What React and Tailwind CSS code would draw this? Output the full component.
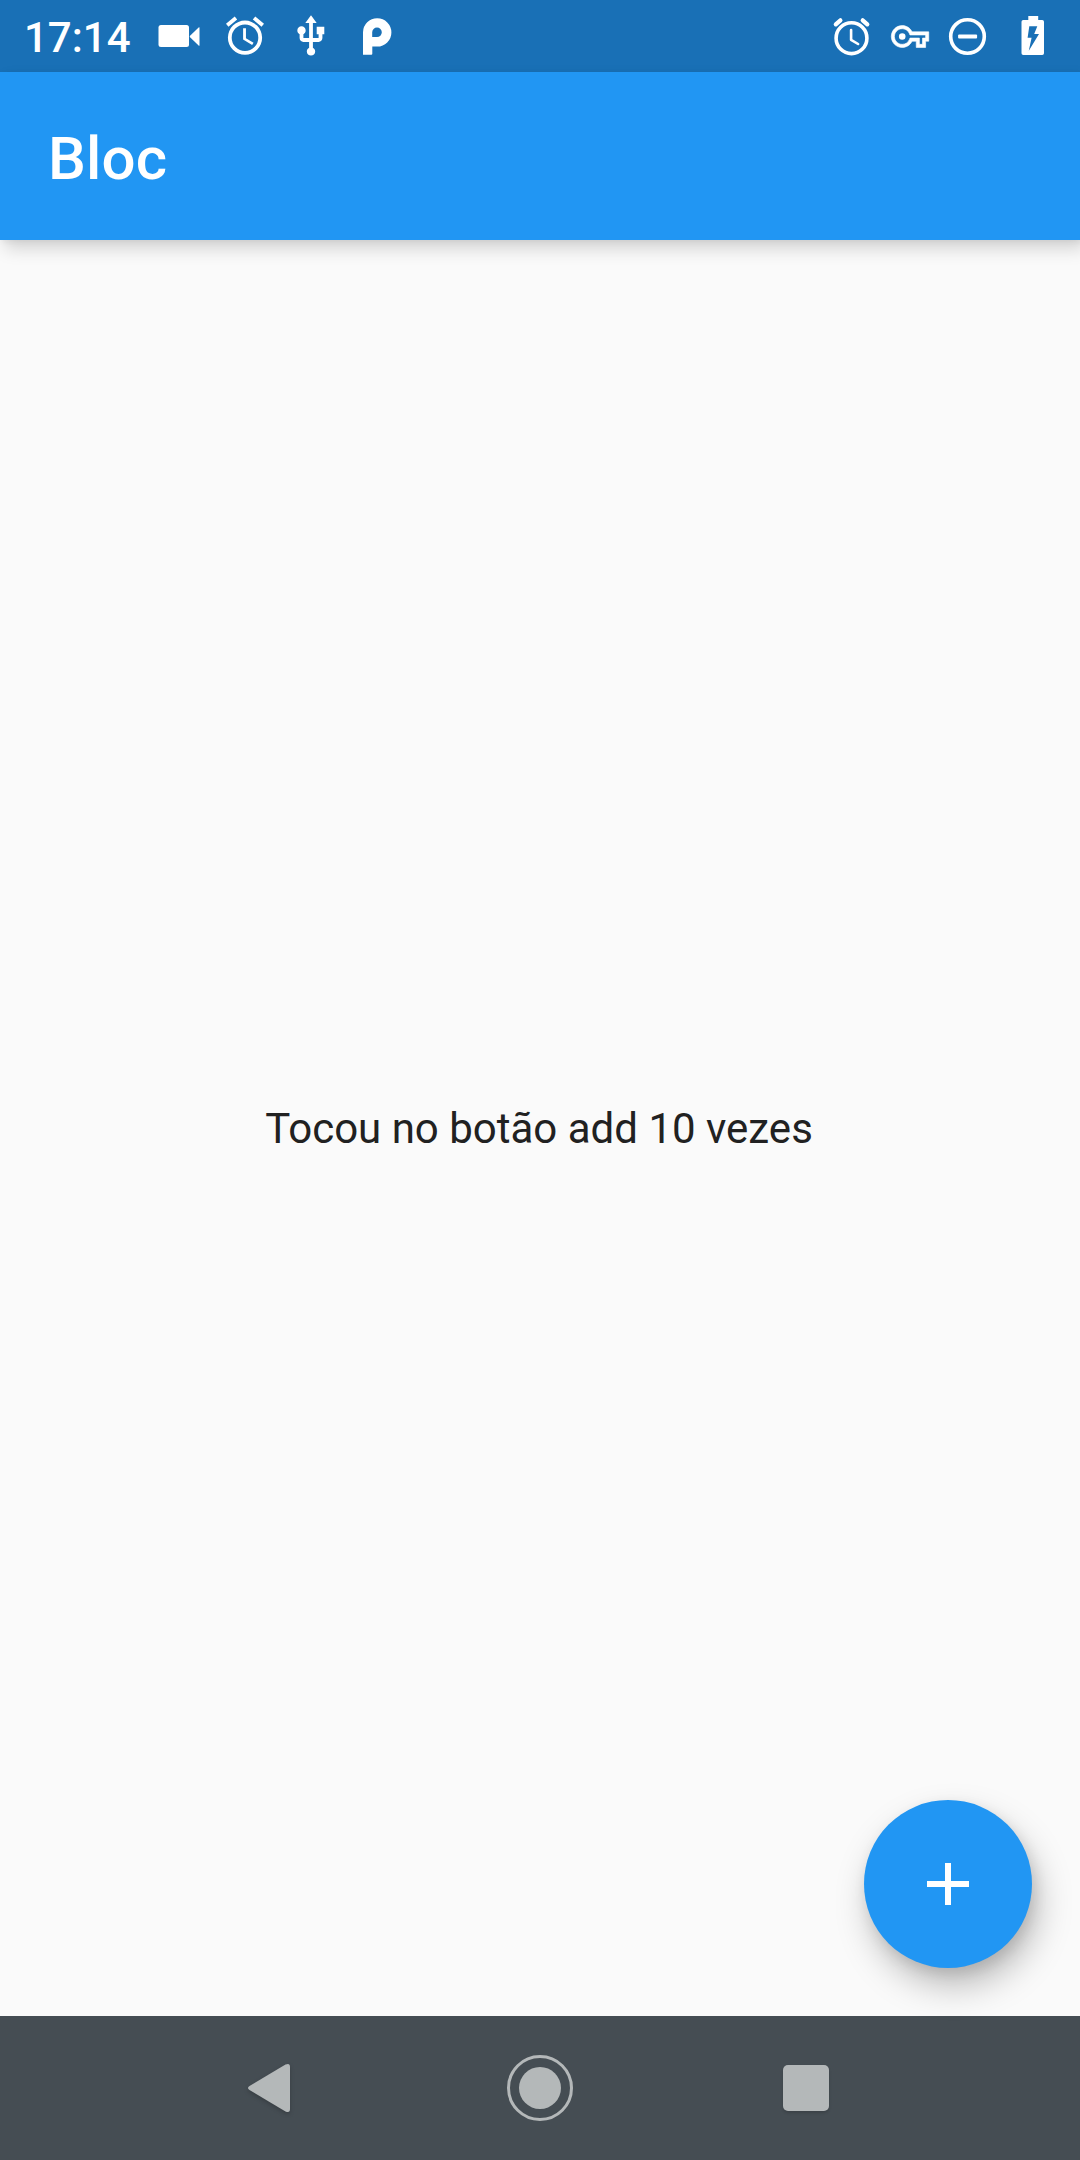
function StatusIcon({ children, className = "" }) {
  return (
    <svg className={`size-12 shrink-0 ${className}`} viewBox="0 0 48 48" fill="currentColor" aria-hidden="true">
      {children}
    </svg>
  );
}

function StatusBar() {
  return (
    <div className="flex h-[72px] items-center justify-between bg-[#1970b6] pr-[23px] pl-6 text-white">
      <div className="flex items-center gap-[18px]">
        <span className="w-[113px] pt-1 text-[42px] leading-[48px] font-medium">17:14</span>
        <StatusIcon>
          <rect x="3.5" y="13" width="30.5" height="22" rx="2.5" />
          <path d="M34.8 24 43.6 15.4q.9-.7.9.4v17.4q0 1.1-.9.4L34.8 25z" />
        </StatusIcon>
        <StatusIcon>
          <path
            transform="translate(1.2 1) scale(1.9)"
            d="M22 5.72l-4.6-3.86-1.29 1.53 4.6 3.86L22 5.72zM7.88 3.39L6.6 1.86 2 5.71l1.29 1.53 4.59-3.85zM12.5 8H11v6l4.75 2.85.75-1.23-4-2.37V8zM12 4a9 9 0 1 0 0 18 9 9 0 0 0 0-18zm0 16a7 7 0 1 1 0-14 7 7 0 0 1 0 14z"
          />
        </StatusIcon>
        <StatusIcon>
          <path
            transform="translate(1.2 1.4) scale(1.9)"
            d="M15 7v4h1v2h-3V5h2l-3-4-3 4h2v8H8v-2.07c.7-.37 1.2-1.08 1.2-1.93 0-1.21-.99-2.2-2.2-2.2-1.21 0-2.2.99-2.2 2.2 0 .85.5 1.56 1.2 1.93V13c0 1.11.89 2 2 2h3v3.05c-.71.37-1.2 1.1-1.2 1.95 0 1.22.99 2.2 2.2 2.2 1.21 0 2.2-.98 2.2-2.2 0-.85-.49-1.58-1.2-1.95V15h3c1.11 0 2-.89 2-2v-2h1V7h-4z"
          />
        </StatusIcon>
        <StatusIcon>
          <path
            fillRule="evenodd"
            d="M10 42.7V20.3a14.2 14.2 0 1 1 14.2 14.3H19.3V41.7q0 1-1 1zM19.2 25.1V20.3a4.8 4.8 0 1 1 4.8 4.8z"
          />
        </StatusIcon>
      </div>
      <div className="flex items-center gap-[10px]">
        <StatusIcon>
          <g fill="none" stroke="currentColor">
            <circle cx="23.5" cy="26.2" r="15.4" strokeWidth="3.6" />
            <path strokeWidth="4.2" strokeLinecap="round" d="M7.8 12.3 12.4 8.3M39.3 12.3 34.7 8.3" />
            <path strokeWidth="2.6" strokeLinecap="round" strokeLinejoin="round" d="M23.1 18V27.8L30.1 32" />
          </g>
        </StatusIcon>
        <StatusIcon>
          <g transform="translate(5.3 5.8) scale(1.56)">
            <path
              stroke="currentColor"
              strokeWidth="0.4"
              d="M22 19h-6v-4h-2.68c-1.14 2.42-3.6 4-6.32 4-3.86 0-7-3.14-7-7s3.14-7 7-7c2.72 0 5.17 1.58 6.32 4H24v6h-2v4zm-4-2h2v-4h2v-2H11.94l-.23-.67C11.01 8.34 9.11 7 7 7c-2.76 0-5 2.24-5 5s2.24 5 5 5c2.11 0 4.01-1.34 4.71-3.33l.23-.67H18v4z"
            />
            <circle cx="7" cy="12" r="2.1" />
          </g>
        </StatusIcon>
        <StatusIcon>
          <circle cx="23.5" cy="24.5" r="16.8" fill="none" stroke="currentColor" strokeWidth="3.6" />
          <rect x="14.1" y="22.6" width="19" height="3.8" rx="1" />
        </StatusIcon>
        <StatusIcon className="ml-[7px]">
          <path
            fillRule="evenodd"
            d="M19.3 4h9.9v4h4q1.8 0 1.8 1.8v31.4q0 1.8-1.8 1.8H14.3q-1.8 0-1.8-1.8V9.8q0-1.8 1.8-1.8h5zM20.3 14.3 18.6 25.8h4L19.8 38.8 30 22H25.2L28.3 14.3z"
          />
        </StatusIcon>
      </div>
    </div>
  );
}

function AppBar() {
  return (
    <header className="z-10 flex h-[168px] shrink-0 items-center bg-[#2196f3] px-12 pt-[5px] shadow-[5px_9px_16px_rgba(0,0,0,0.15),2px_2px_6px_rgba(0,0,0,0.06)]">
      <h1 className="text-[60px] leading-[70px] font-medium tracking-[0.15px] text-white">Bloc</h1>
    </header>
  );
}

function NavigationBar() {
  return (
    <nav className="flex h-36 shrink-0 items-center justify-center gap-[194px] bg-[#454d53] text-[#b4b8b9]">
      <button aria-label="Back" className="size-[72px]">
        <svg viewBox="0 0 72 72" fill="currentColor" className="size-full drop-shadow-[0_2px_2px_rgba(0,0,0,0.2)]">
          <path d="M11.5 34 47.5 12.6Q52 10.5 52 15V57Q52 61.5 47.5 59.4L11.5 38Q8.5 36 11.5 34z" />
        </svg>
      </button>
      <button aria-label="Home" className="size-[72px]">
        <svg viewBox="0 0 72 72" className="size-full">
          <circle cx="36" cy="36" r="31.5" fill="none" stroke="currentColor" strokeWidth="3" />
          <circle cx="36" cy="36" r="21" fill="currentColor" />
        </svg>
      </button>
      <button aria-label="Overview" className="flex size-[72px] items-center justify-center">
        <span className="size-[46px] rounded-[5px] bg-current shadow-[0_2px_3px_rgba(0,0,0,0.15)]" />
      </button>
    </nav>
  );
}

export default function App() {
  return (
    <div className="flex h-[2160px] w-[1080px] flex-col overflow-hidden bg-[#fafafa] font-['Roboto',sans-serif]">
      <StatusBar />
      <AppBar />
      <main className="relative flex flex-1 items-center justify-center">
        <p className="pr-0.5 text-[42px] leading-[49px] whitespace-nowrap text-[#212121]">
          Tocou no botão add 10 vezes
        </p>
        <button
          aria-label="Add"
          className="absolute right-12 bottom-12 flex size-[168px] items-center justify-center rounded-full bg-[#2196f3] text-white shadow-[6px_18px_34px_rgba(0,0,0,0.25),3px_6px_14px_rgba(0,0,0,0.1)]"
        >
          <svg viewBox="0 0 24 24" fill="currentColor" className="size-[72px]">
            <path d="M19 13h-6v6h-2v-6H5v-2h6V5h2v6h6v2z" />
          </svg>
        </button>
      </main>
      <NavigationBar />
    </div>
  );
}
